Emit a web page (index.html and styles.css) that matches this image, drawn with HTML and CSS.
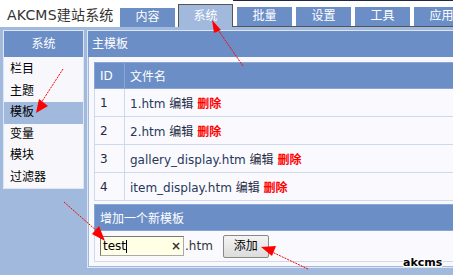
FILE: index.html
```html
<!DOCTYPE html>
<html>
<head>
<meta charset="utf-8">
<link rel="stylesheet" href="styles.css">
</head>
<body>
<div class="page">
  <header class="top">
    <div class="logo">AKCMS建站系统</div>
    <div class="tabs">
      <div class="tab">内容</div>
      <div class="tab active">系统</div>
      <div class="tabs-rest">
        <div class="tab">批量</div>
        <div class="tab">设置</div>
        <div class="tab">工具</div>
        <div class="tab">应用</div>
      </div>
    </div>
  </header>
  <div class="layout">
    <aside class="side">
      <div class="side-head">系统</div>
      <ul class="side-list">
        <li>栏目</li>
        <li>主题</li>
        <li class="on">模板</li>
        <li>变量</li>
        <li>模块</li>
        <li>过滤器</li>
      </ul>
    </aside>
    <section class="main">
      <div class="main-head">主模板</div>
      <div class="main-body">
        <table class="grid">
          <tr class="th"><td class="c-id">ID</td><td>文件名</td></tr>
          <tr><td class="c-id">1</td><td><span class="fn">1.htm</span> <span class="ed">编辑</span> <b class="del">删除</b></td></tr>
          <tr><td class="c-id">2</td><td><span class="fn">2.htm</span> <span class="ed">编辑</span> <b class="del">删除</b></td></tr>
          <tr><td class="c-id">3</td><td><span class="fn">gallery_display.htm</span> <span class="ed">编辑</span> <b class="del">删除</b></td></tr>
          <tr><td class="c-id">4</td><td><span class="fn">item_display.htm</span> <span class="ed">编辑</span> <b class="del">删除</b></td></tr>
        </table>
        <table class="grid add">
          <tr class="th"><td>增加一个新模板</td></tr>
          <tr><td>
            <div class="form">
              <div class="input"><span class="val">test</span><span class="caret"></span><span class="clear">×</span></div>
              <span class="ext">.htm</span>
              <span class="btn">添加</span>
            </div>
          </td></tr>
        </table>
      </div>
    </section>
  </div>

  <svg class="arrows" width="453" height="275" viewBox="0 0 453 275">
    <g stroke="#f00" stroke-width="1" fill="none" stroke-dasharray="2 1">
      <line x1="243" y1="66" x2="216" y2="27"/>
      <line x1="63" y1="69" x2="41" y2="103"/>
      <line x1="64" y1="202" x2="98" y2="232"/>
      <line x1="308" y1="269" x2="272" y2="252"/>
    </g>
    <g fill="#f00">
      <polygon points="212,20 221,30 214,33"/>
      <polygon points="36,113 39,99 48,106"/>
      <polygon points="105,241 92,234 99,226"/>
      <polygon points="261,247 276,246 272,256"/>
    </g>
  </svg>
  <div class="mark">akcms</div>
</div>
</body>
</html>
```
FILE: styles.css
```css
html, body {
  margin: 0;
  padding: 0;
}
body {
  background: #a0b9dd;
  font-family: "DejaVu Sans", "Noto Sans CJK SC", sans-serif;
  font-size: 12px;
  overflow: hidden;
  width: 453px;
  height: 275px;
}
.page {
  position: relative;
  width: 520px;
  height: 275px;
}
.top {
  display: flex;
  align-items: flex-end;
  height: 27px;
  background: #fff;
}
.logo {
  width: 113px;
  padding-left: 7px;
  align-self: center;
  font-size: 14px;
  color: #333;
  letter-spacing: 0.2px;
}
.tabs {
  display: flex;
  align-items: flex-end;
  flex: 1;
  height: 27px;
}
.tab {
  width: 55px;
  height: 19px;
  line-height: 19px;
  margin-right: 4px;
  background: #6b8ec6;
  color: #fff;
  text-align: center;
}
.tab.active {
  height: 22px;
  line-height: 22px;
  width: 53px;
  margin-left: -1px;
  margin-right: 0;
  background: #a0b9dd;
  border: 1px solid #555;
  border-bottom: 0;
}
.tabs-rest {
  display: flex;
  align-items: flex-end;
  flex: 1;
  height: 25px;
  padding-left: 4px;
  border-top: 2px solid #1c2a40;
  border-bottom: 1px solid #555;
}
.tabs-rest .tab {
  height: 19px;
}
.layout {
  display: flex;
  align-items: flex-start;
  padding-top: 3px;
}
.side {
  width: 79px;
  margin-left: 3px;
  border: 1px solid #dde6f3;
  background: #f8f8fc;
}
.side-head, .main-head {
  height: 26px;
  line-height: 26px;
  background: #6b8ec6;
  color: #fff;
}
.side-head {
  text-align: center;
}
.side-list {
  list-style: none;
  margin: 0;
  padding: 2px 0 0;
}
.side-list li {
  height: 21.5px;
  line-height: 21.5px;
  padding-left: 6px;
  color: #000;
}
.side-list li.on {
  background: #a0b9dd;
}
.main {
  width: 400px;
  margin-left: 3px;
  border: 1px solid #dde6f3;
  background: #6b8ec6;
}
.main-head {
  padding-left: 4px;
}
.main-body {
  padding: 5px 5px 4px;
  background: #f9f9fd;
  display: flex;
  flex-direction: column;
  gap: 3px;
  border: 1px solid #a0b9dd;
  border-top: 0;
  margin: 0;
}
.grid {
  width: 100%;
  border-collapse: collapse;
  border: 1px solid #8aa6d4;
  background: #fafafe;
}
.grid td {
  height: 27px;
  padding: 0 5px;
  border: 1px solid #cdd9ec;
  color: #1d2b45;
  white-space: nowrap;
}
.grid .th td {
  height: 25px;
  background: #6b8ec6;
  color: #fff;
  border-color: #8aa6d4;
}
.grid .c-id {
  width: 19px;
}
.fn {
  color: #26385a;
}
.ed {
  color: #1d2b45;
}
.del {
  color: #f00;
}
.add td {
  height: 30px;
}
.form {
  display: flex;
  align-items: center;
}
.input {
  display: flex;
  align-items: center;
  width: 78px;
  height: 18px;
  padding: 0 2px;
  background: #ffffe6;
  border: 1px solid #aaa;
  border-top-color: #777;
  border-left-color: #777;
  font-size: 12px;
  color: #000;
}
.caret {
  width: 1px;
  height: 13px;
  background: #000;
}
.clear {
  margin-left: auto;
  font-size: 12px;
  font-weight: bold;
  color: #333;
}
.ext {
  margin-left: 1px;
  color: #333;
  font-size: 12px;
}
.btn {
  margin-left: 10px;
  width: 44px;
  height: 21px;
  line-height: 21px;
  text-align: center;
  border: 1px solid #888;
  border-radius: 2px;
  background: linear-gradient(#f4f4f4, #dcdcdc);
  color: #000;
}
.arrows {
  position: absolute;
  left: 0;
  top: 0;
}
.mark {
  position: absolute;
  left: 403px;
  top: 256px;
  font-size: 11px;
  font-weight: bold;
  color: #000;
  text-shadow: 1px 0 #fff, -1px 0 #fff, 0 1px #fff, 0 -1px #fff, 1px 1px #fff, -1px -1px #fff, 1px -1px #fff, -1px 1px #fff;
}
```
